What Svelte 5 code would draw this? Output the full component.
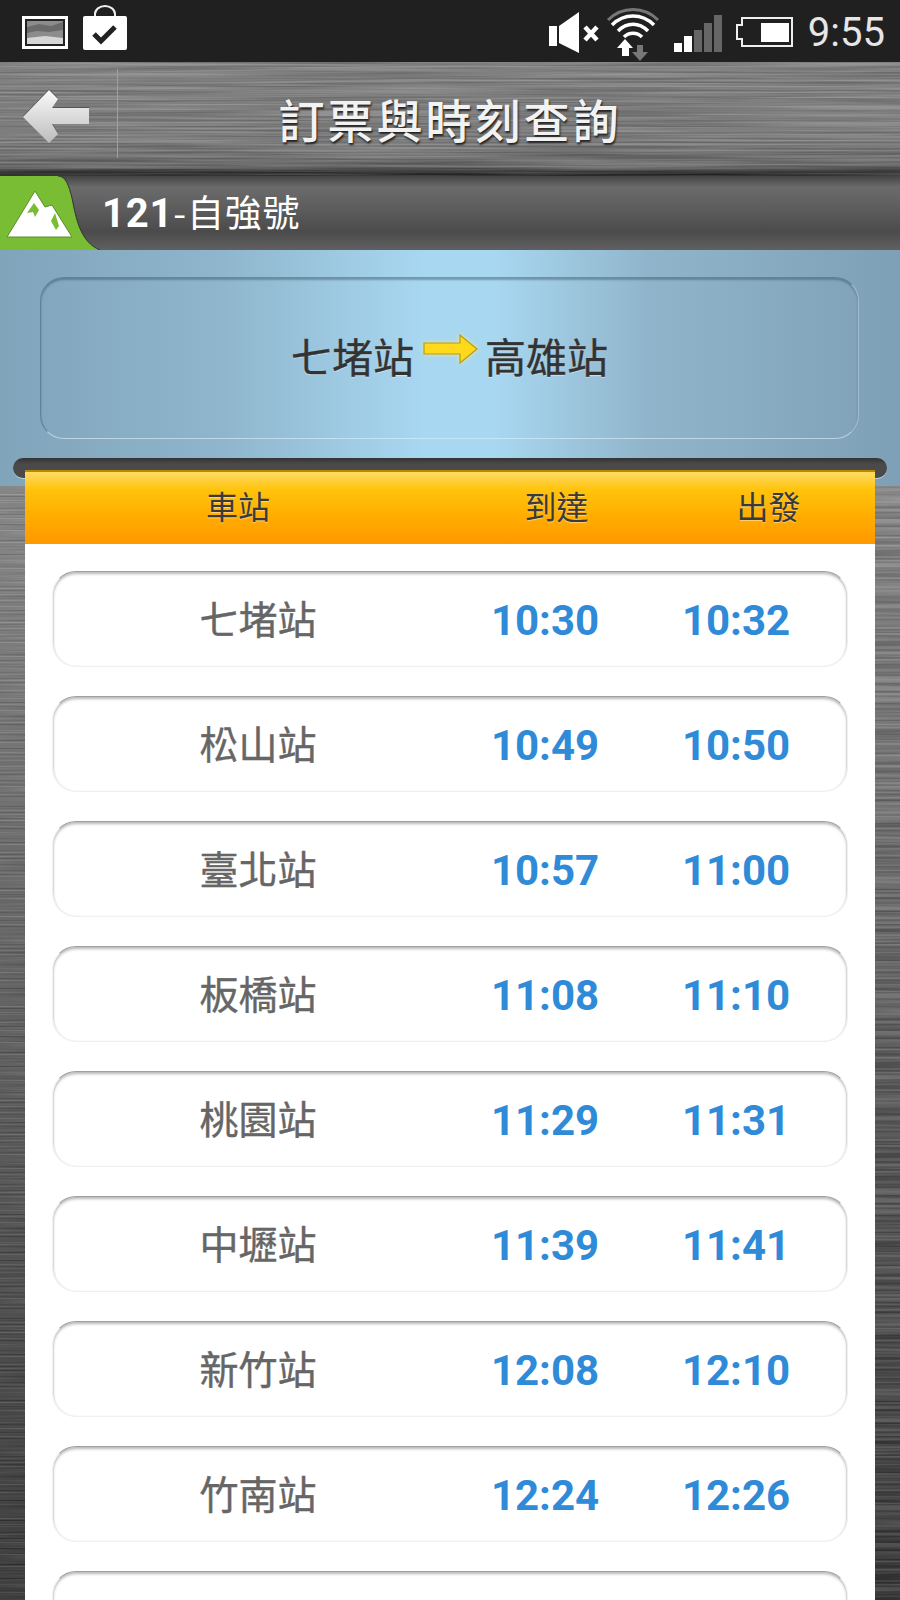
<script>
  const stops = [
    ['七堵站', '10:30', '10:32'],
    ['松山站', '10:49', '10:50'],
    ['臺北站', '10:57', '11:00'],
    ['板橋站', '11:08', '11:10'],
    ['桃園站', '11:29', '11:31'],
    ['中壢站', '11:39', '11:41'],
    ['新竹站', '12:08', '12:10'],
    ['竹南站', '12:24', '12:26'],
    ['', '', '']
  ];
</script>

{#snippet metal(id, seed)}
  <svg class="metal" aria-hidden="true">
    <filter id={id} x="0" y="0" width="100%" height="100%" color-interpolation-filters="sRGB">
      <feTurbulence type="fractalNoise" baseFrequency="0.004 0.5" numOctaves="3" seed={seed} />
      <feColorMatrix type="matrix" values="2 0 0 0 -0.5  2 0 0 0 -0.5  2 0 0 0 -0.5  0 0 0 0 0.16" />
    </filter>
    <rect width="100%" height="100%" filter="url(#{id})" />
  </svg>
{/snippet}

<div class="page">
  <div class="status">
    <div class="status-left">
      <svg class="pic" width="48" height="35" viewBox="0 0 48 35">
        <rect x="1" y="1" width="46" height="33" fill="#fff" />
        <rect x="4" y="4" width="40" height="27" fill="#222" />
        <rect x="6" y="6" width="36" height="23" fill="#8c8c8c" />
        <path d="M6 12 L18 9 L30 11 L42 7 V15 L28 17 L16 16 L6 18 Z" fill="#6a6a6a" />
        <path d="M6 23 L24 21 L42 23 V29 H6 Z" fill="#d6d6d6" />
      </svg>
      <svg class="bag" width="46" height="46" viewBox="0 0 46 46">
        <path d="M13 12 V9 a10 8 0 0 1 20 0 V12" fill="none" stroke="#eee" stroke-width="2" />
        <rect x="1" y="11" width="44" height="34" rx="2" fill="#fff" />
        <path d="M12 29 L19 36 L33 22" fill="none" stroke="#222" stroke-width="5" />
      </svg>
    </div>
    <div class="status-right">
      <svg width="52" height="42" viewBox="0 0 52 42">
        <path d="M1 15 H9 V35 H1 Z M11 15 L31 1 V42 L11 32 Z" fill="#fff" />
        <path d="M37 16 L49 29 M49 16 L37 29" stroke="#fff" stroke-width="4.5" />
      </svg>
      <svg class="wifi" width="54" height="52" viewBox="0 0 54 52">
        <g fill="none">
          <path d="M2 15 C16 1 38 1 52 15" stroke="#777" stroke-width="3" />
          <path d="M6 20 C18 8 36 8 48 20" stroke="#fff" stroke-width="3.5" />
          <path d="M12 26 C21 17 33 17 42 26" stroke="#fff" stroke-width="3.5" />
          <path d="M18 32 C23 27 31 27 36 32" stroke="#fff" stroke-width="3.5" />
        </g>
        <path d="M19 34 L27 43 H23 V51 H16 V43 H11 Z" fill="#fff" />
        <path d="M31 40 H37 V47 H42 L34 56 L26 47 H31 Z" fill="#777" />
      </svg>
      <svg class="signal" width="48" height="38" viewBox="0 0 48 38">
        <rect x="0" y="28" width="8" height="9" fill="#fff" />
        <rect x="10" y="21" width="8" height="16" fill="#fff" />
        <rect x="20" y="15" width="8" height="22" fill="#666" />
        <rect x="30" y="8" width="8" height="29" fill="#666" />
        <rect x="40" y="0" width="8" height="37" fill="#666" />
      </svg>
      <svg class="battery" width="58" height="30" viewBox="0 0 58 30">
        <path d="M6 1 H56 V29 H6 V22 H1 V8 H6 Z" fill="none" stroke="#eee" stroke-width="2" />
        <rect x="25" y="6" width="28" height="19" fill="#fff" />
      </svg>
      <span class="clock">9:55</span>
    </div>
  </div>

  <header class="header">
    {@render metal('metal-top', 3)}
    <div class="back">
      <svg width="66" height="53" viewBox="0 0 66 53">
        <defs>
          <linearGradient id="arrow-grad" x1="0" y1="0" x2="0" y2="1">
            <stop offset="0" stop-color="#fafafa" />
            <stop offset="1" stop-color="#bdbdbd" />
          </linearGradient>
        </defs>
        <path d="M0 27 L26 0 L35 9 L29 18 H66 V34 H29 L35 44 L26 53 Z" fill="url(#arrow-grad)" />
      </svg>
    </div>
    <h1>訂票與時刻查詢</h1>
  </header>

  <div class="train">
    <svg class="tab" width="100" height="74" viewBox="0 0 100 74">
      <path d="M0 0 H58 C66 0 69 10 72 22 C76 42 80 66 100 74 H0 Z" fill="#78bd34" />
      <path d="M58 0 C66 0 69 10 72 22 C76 42 80 66 100 74" fill="none" stroke="#333" stroke-width="1" />
      <path d="M7 61 L35 15 L45 31 L52 29 L72 61 Z" fill="#fff" stroke="#5c8f28" stroke-width="1" />
      <path d="M27 37 L34 27 L39 34 L35 41 L33 36 Z M51 45 L55 37 L59 50 L56 54 Z" fill="#78bd34" />
    </svg>
    <div class="train-name"><b>121</b>-自強號</div>
  </div>

  <section class="route">
    <div class="route-box">
      <span>七堵站</span>
      <svg width="56" height="32" viewBox="0 0 56 32">
        <path d="M1 10 H37 V2 L54 16 L37 30 V21 H1 Z" fill="#ffd91a" stroke="#b59a1c" stroke-width="1.2" />
      </svg>
      <span class="to">高雄站</span>
    </div>
  </section>

  <main class="board">
    {@render metal('metal-bottom', 8)}
    <div class="rail"></div>
    <div class="card">
      <div class="card-head">
        <span class="h-station">車站</span>
        <span class="h-arrive">到達</span>
        <span class="h-depart">出發</span>
      </div>
      <div class="rows">
        {#each stops as [name, arrive, depart]}
          <div class="row">
            <span class="name">{name}</span>
            <span class="time arrive">{arrive}</span>
            <span class="time depart">{depart}</span>
          </div>
        {/each}
      </div>
    </div>
  </main>
</div>

<style>
  :global(body) {
    margin: 0;
    background: #333;
  }
  .page {
    width: 900px;
    height: 1600px;
    overflow: hidden;
    display: flex;
    flex-direction: column;
    font-family: "Noto Sans CJK TC", "Noto Sans", sans-serif;
  }
  .status {
    flex: none;
    height: 62px;
    box-sizing: border-box;
    background: #202020;
    display: flex;
    justify-content: space-between;
    padding: 5px 15px 0 21px;
  }
  .status svg {
    display: block;
    flex: none;
    overflow: visible;
  }
  .status-left {
    display: flex;
    gap: 13px;
    align-items: flex-start;
  }
  .pic {
    margin-top: 10px;
  }
  .status-right {
    display: flex;
    align-items: flex-start;
  }
  .status-right > svg:first-child {
    margin-top: 6px;
  }
  .wifi {
    margin-left: 6px;
  }
  .signal {
    margin: 10px 0 0 14px;
  }
  .battery {
    margin: 12px 0 0 14px;
  }
  .clock {
    margin: 2px 0 0 14px;
    font: 400 40px/1.3 Roboto, sans-serif;
    color: #e6e6e6;
  }
  .metal {
    position: absolute;
    inset: 0;
    width: 100%;
    height: 100%;
  }
  .header {
    flex: none;
    position: relative;
    height: 114px;
    box-sizing: border-box;
    background: linear-gradient(#808080, #7c7c7c 70%, #666 92%, #333 96%, #222);
    display: flex;
    align-items: center;
    justify-content: center;
  }
  .back {
    position: absolute;
    left: 0;
    top: 7px;
    width: 118px;
    height: 89px;
    box-sizing: border-box;
    border-right: 1px solid #a0a0a0;
    padding: 21px 0 0 23px;
  }
  .back svg {
    display: block;
    filter: drop-shadow(0 -1px 0 #555);
  }
  h1 {
    position: relative;
    margin: 0;
    font-size: 46px;
    font-weight: 500;
    letter-spacing: 3px;
    line-height: 1.2;
    color: #f2f2f2;
    text-shadow: 1px 2px 2px #222;
  }
  .train {
    flex: none;
    position: relative;
    height: 74px;
    background: linear-gradient(#444, #6b6b6b 15%, #5f5f5f 40%, #4b4b4b 75%, #606060);
    display: flex;
    align-items: center;
  }
  .tab {
    flex: none;
    display: block;
  }
  .train-name {
    margin-left: 2px;
    font-size: 37px;
    color: #fff;
    line-height: 1;
    letter-spacing: 0.8px;
  }
  .train-name b {
    font: 700 40px/1 Roboto, sans-serif;
  }
  .route {
    flex: none;
    height: 236px;
    box-sizing: border-box;
    padding: 27px 41px 0 40px;
    background: linear-gradient(90deg, #80a4ba 0%, #8fb6cd 25%, #a8d7f1 47%, #a8d7f1 55%, #90b5cb 72%, #7ea0b6 100%);
  }
  .route-box {
    height: 162px;
    box-sizing: border-box;
    border: 1px solid rgba(70, 100, 120, 0.55);
    border-bottom-color: rgba(225, 240, 250, 0.6);
    border-right-color: rgba(210, 230, 240, 0.4);
    border-radius: 24px;
    box-shadow: inset 0 2px 2px rgba(50, 80, 100, 0.45);
    display: flex;
    align-items: center;
    justify-content: center;
    gap: 9px;
    font-size: 41px;
    font-weight: 400;
    -webkit-text-stroke: 0.4px #333;
    color: #333;
    text-shadow: 0 1px 1px rgba(255, 255, 255, 0.5);
  }
  .route-box span {
    margin-top: -6px;
  }
  .route-box .to {
    margin-left: -3px;
  }
  .route-box svg {
    display: block;
    margin-top: -18px;
    filter: drop-shadow(0 0 2px rgba(255, 240, 120, 0.8));
  }
  .board {
    flex: 1;
    position: relative;
    min-height: 0;
    margin-top: -28px;
    background: linear-gradient(#8a8a8a 0, #6e6e6e 30%, #4a4a4a 70%, #333 100%);
  }
  .board > .metal {
    top: 28px;
    height: calc(100% - 28px);
  }
  .board::before {
    content: "";
    position: absolute;
    inset: 0 0 auto 0;
    height: 28px;
    background: linear-gradient(90deg, #80a4ba 0%, #8fb6cd 25%, #a8d7f1 47%, #a8d7f1 55%, #90b5cb 72%, #7ea0b6 100%);
    z-index: 1;
  }
  .rail {
    position: relative;
    z-index: 1;
    height: 20px;
    margin: 0 13px;
    border-radius: 10px;
    background: linear-gradient(#333, #4a4a4a 30%, #4a4a4a);
    box-shadow: 0 1px 0 rgba(255, 255, 255, 0.5);
  }
  .card {
    position: relative;
    z-index: 1;
    margin: -8px 25px 0;
    background: #fff;
  }
  .card-head {
    height: 74px;
    box-sizing: border-box;
    position: relative;
    border-top: 2px solid #b98a00;
    background: linear-gradient(#ffdc62 0, #ffd34a 8%, #ffc40c 24%, #ffae00 60%, #ff9800 100%);
    font-size: 32px;
    line-height: 66px;
    color: #3a3a3a;
    text-shadow: 0 1px 1px rgba(255, 255, 255, 0.45);
    display: grid;
    grid-template-columns: 426px 211px 213px;
  }
  .h-station,
  .h-arrive,
  .h-depart {
    justify-self: center;
  }
  .rows {
    padding: 27px 27px 0;
    display: flex;
    flex-direction: column;
    gap: 29px;
  }
  .row {
    height: 96px;
    box-sizing: border-box;
    flex: none;
    border: 1px solid #f0f0f0;
    border-top-color: #a0a0a0;
    border-radius: 24px;
    box-shadow: inset 0 2px 3px rgba(0, 0, 0, 0.28), inset 1px 0 1px rgba(0, 0, 0, 0.06), inset -1px 0 1px rgba(0, 0, 0, 0.06);
    display: grid;
    grid-template-columns: 410px 164px 218px;
    align-items: center;
  }
  .name {
    justify-self: center;
    font-size: 39px;
    color: #666;
    font-weight: 400;
    -webkit-text-stroke: 0.4px #666;
    line-height: 1;
    margin-bottom: 3px;
  }
  .time {
    justify-self: center;
    font: 700 42px/1 Roboto, sans-serif;
    color: #2f8bd8;
    margin-top: 4px;
  }
</style>
